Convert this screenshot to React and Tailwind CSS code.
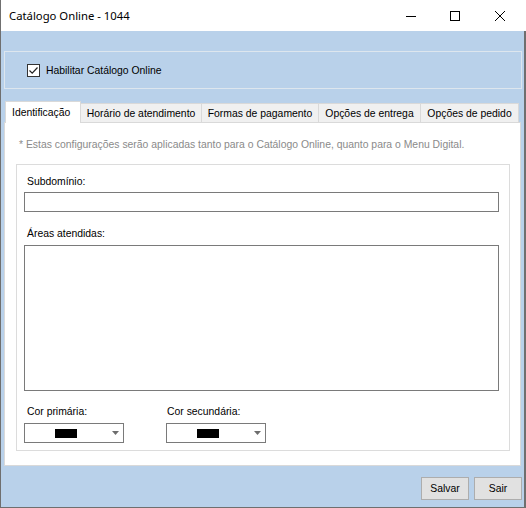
import React from 'react';

const tabs = [
    { label: 'Identificação', w: 'w-[76px]', active: true },
    { label: 'Horário de atendimento', w: 'w-[121px]' },
    { label: 'Formas de pagamento', w: 'w-[117px]' },
    { label: 'Opções de entrega', w: 'w-[102px]' },
    { label: 'Opções de pedido', w: 'w-[98px]' },
];

function ColorCombo({ className }) {
    return (
        <div className={`h-[20px] w-[100px] border border-[#7a7a7a] bg-white flex items-center ${className || ''}`}>
            <div className="ml-[30px] h-[9px] w-[22px] bg-black"></div>
            <svg className="ml-auto mr-[4px]" width="7" height="4" viewBox="0 0 7 4">
                <path d="M0 0 H7 L3.5 4 Z" fill="#6d6d6d" />
            </svg>
        </div>
    );
}

export default function App() {
    return (
        <div className="w-[526px] h-[508px] flex flex-col text-[10.4px] leading-[13px] text-black" style={{ fontFamily: '"Liberation Sans", Arial, sans-serif' }}>
            {/* Barra de título */}
            <div className="h-[31px] bg-white flex items-center border-l border-[#707070]">
                <span className="ml-[8px] text-[11.3px] text-[#000]" style={{ fontFamily: '"Noto Sans", "Open Sans", sans-serif' }}>Catálogo Online - 1044</span>
                <div className="ml-auto flex items-center">
                    <svg className="mr-[34px]" width="10" height="10" viewBox="0 0 10 10">
                        <path d="M0 5.5 H10" stroke="#000" strokeWidth="1" />
                    </svg>
                    <svg className="mr-[35px]" width="10" height="10" viewBox="0 0 10 10">
                        <rect x="0.5" y="0.5" width="9" height="9" fill="none" stroke="#000" strokeWidth="1" />
                    </svg>
                    <svg className="mr-[21px]" width="10" height="10" viewBox="0 0 10 10">
                        <path d="M0 0 L10 10 M10 0 L0 10" stroke="#000" strokeWidth="1" />
                    </svg>
                </div>
            </div>

            {/* Corpo */}
            <div className="flex-1 bg-[#b9d1ea] border-l border-r-2 border-b border-[#6f6f6f] pl-[3px] pr-[2px] flex flex-col">
                <div className="mt-[20px] h-[38px] border border-[#dde6ee] flex items-center pl-[22px]">
                    <div className="h-[13px] w-[13px] border border-[#333] bg-white flex items-center justify-center">
                        <svg width="11" height="11" viewBox="0 0 11 11">
                            <path d="M1.5 5.5 L4.2 8.2 L9.5 2.5" fill="none" stroke="#222" strokeWidth="1.2" />
                        </svg>
                    </div>
                    <span className="ml-[6px]">Habilitar Catálogo Online</span>
                </div>

                {/* Abas */}
                <div className="mt-[11px] flex items-end h-[22px] pl-[1px]">
                    {tabs.map((t) =>
                        t.active ? (
                            <div key={t.label} className={`${t.w} h-[22px] bg-white border border-b-0 border-[#d9d9d9] flex items-center pl-[6px] relative top-[1px]`}>
                                {t.label}
                            </div>
                        ) : (
                            <div key={t.label} className={`${t.w} h-[19px] bg-[#f0f0f0] border border-l-0 border-b-0 border-[#d9d9d9] flex items-center justify-center`}>
                                {t.label}
                            </div>
                        )
                    )}
                </div>
                <div className="h-[344px] w-[517px] bg-white border border-[#d9d9d9] flex flex-col px-[11px]">
                    <div className="mt-[15px] ml-[3px] text-[#8a8a8a]">* Estas configurações serão aplicadas tanto para o Catálogo Online, quanto para o Menu Digital.</div>
                    <div className="mt-[13px] h-[287px] w-[494px] border border-[#dcdcdc] flex flex-col px-[7px]">
                        <div className="mt-[10px] ml-[3px]">Subdomínio:</div>
                        <div className="mt-[4px] h-[20px] w-[475px] border border-[#7a7a7a] bg-white"></div>
                        <div className="mt-[15px] ml-[3px]">Áreas atendidas:</div>
                        <div className="mt-[5px] h-[146px] w-[475px] border border-[#7a7a7a] bg-white"></div>
                        <div className="mt-[14px] flex">
                            <div className="flex flex-col">
                                <div className="ml-[3px]">Cor primária:</div>
                                <ColorCombo className="mt-[5px]" />
                            </div>
                            <div className="ml-[42px] flex flex-col">
                                <div className="ml-[1px]">Cor secundária:</div>
                                <ColorCombo className="mt-[5px]" />
                            </div>
                        </div>
                    </div>
                </div>

                {/* Botões */}
                <div className="mt-[11px] flex justify-end gap-[5px]">
                    <button className="h-[23px] w-[48px] bg-[#e1e1e1] border border-[#adadad]">Salvar</button>
                    <button className="h-[23px] w-[48px] bg-[#e1e1e1] border border-[#adadad]">Sair</button>
                </div>
            </div>
        </div>
    );
}
